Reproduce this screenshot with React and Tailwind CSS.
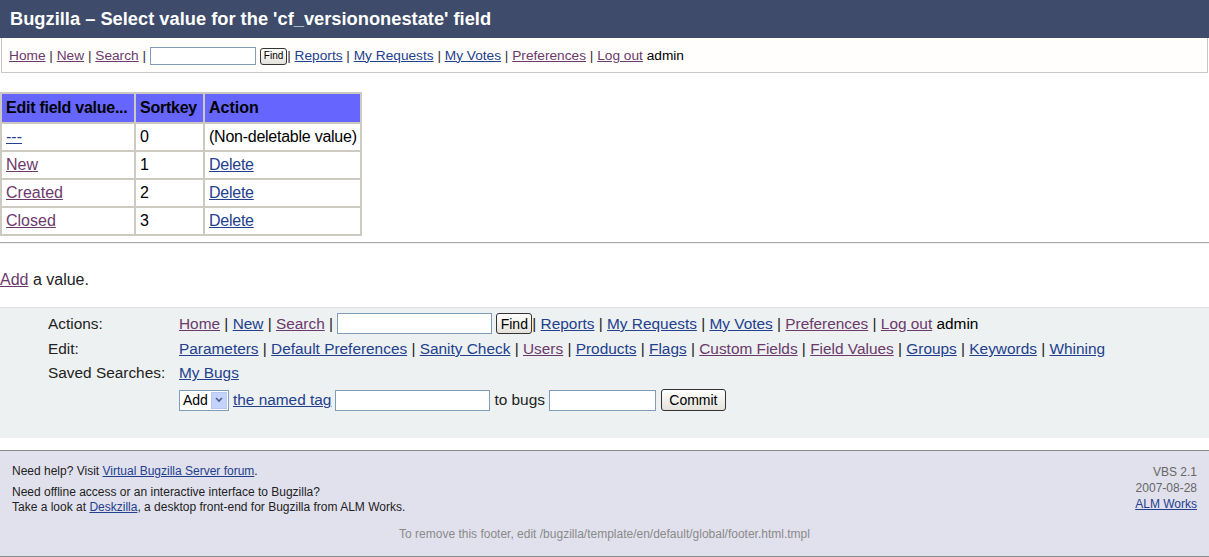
import React from "react";

const visited = "text-[#6b3a6b] underline";
const link = "text-[#23408e] underline";

const Sep = () => <span className="whitespace-pre">{" | "}</span>;

function TopNav() {
  return (
    <div className="mx-[1px] h-[35px] border border-t-0 border-[#c8c8c8] bg-[#fffefc] flex items-center pl-[7px] pt-[2px] text-[13.7px] text-[#333] whitespace-nowrap">
      <a className={visited}>Home</a>
      <Sep />
      <a className={visited}>New</a>
      <Sep />
      <a className={visited}>Search</a>
      <span className="whitespace-pre">{" | "}</span>
      <input className="w-[106px] h-[18px] border border-[#7f9db9] bg-white" />
      <button className="ml-[4px] h-[17px] px-[3px] text-[10px] leading-none rounded-[3px] border border-[#333] bg-gradient-to-b from-white to-[#e4e2da] text-black">
        Find
      </button>
      <span className="whitespace-pre">{"| "}</span>
      <a className={link}>Reports</a>
      <Sep />
      <a className={link}>My Requests</a>
      <Sep />
      <a className={link}>My Votes</a>
      <Sep />
      <a className={visited}>Preferences</a>
      <Sep />
      <a className={visited}>Log out</a>
      <span className="text-black whitespace-pre">{" admin"}</span>
    </div>
  );
}

function ValueTable() {
  const rows = [
    { name: "---", key: "0", action: null },
    { name: "New", key: "1", action: "Delete" },
    { name: "Created", key: "2", action: "Delete" },
    { name: "Closed", key: "3", action: "Delete" },
  ];
  const cell = "border-2 border-[#cdcac1] pl-[4px] pr-[2px] h-[28px] whitespace-nowrap overflow-visible";
  return (
    <table className="mt-[19px] w-[360px] table-fixed border-collapse text-[16px] text-black">
      <colgroup>
        <col className="w-[134px]" />
        <col className="w-[69px]" />
        <col className="w-[157px]" />
      </colgroup>
      <thead>
        <tr className="bg-[#6666ff]">
          <th className={cell + " text-left font-bold h-[30px] tracking-[-0.25px]"}>Edit field value...</th>
          <th className={cell + " text-left font-bold h-[30px] tracking-[-0.25px]"}>Sortkey</th>
          <th className={cell + " text-left font-bold h-[30px]"}>Action</th>
        </tr>
      </thead>
      <tbody>
        {rows.map((r) => (
          <tr key={r.key}>
            <td className={cell}>
              <a className={r.key === "0" ? link : visited}>{r.name}</a>
            </td>
            <td className={cell}>{r.key}</td>
            <td className={cell + " tracking-[-0.25px]"}>
              {r.action ? <a className={link}>{r.action}</a> : "(Non-deletable value)"}
            </td>
          </tr>
        ))}
      </tbody>
    </table>
  );
}

function ActionsBox() {
  const label = "w-[131px] shrink-0";
  return (
    <div className="mt-[15px] bg-[#edf1f1] border-t border-[#dde0e0] h-[131px] pl-[48px] pt-[3px] text-[15.4px] text-[#222] whitespace-nowrap">
      <div className="flex items-center h-[25px]">
        <div className={label}>Actions:</div>
        <a className={visited}>Home</a>
        <Sep />
        <a className={link}>New</a>
        <Sep />
        <a className={visited}>Search</a>
        <span className="whitespace-pre">{" | "}</span>
        <input className="w-[155px] h-[21px] border border-[#7f9db9] bg-white" />
        <button className="ml-[4px] h-[21px] w-[36px] text-[14px] leading-none rounded-[3px] border border-[#333] bg-gradient-to-b from-white to-[#e4e2da] text-black">
          Find
        </button>
        <span className="whitespace-pre">{"| "}</span>
        <a className={link}>Reports</a>
        <Sep />
        <a className={link}>My Requests</a>
        <Sep />
        <a className={link}>My Votes</a>
        <Sep />
        <a className={visited}>Preferences</a>
        <Sep />
        <a className={visited}>Log out</a>
        <span className="text-black whitespace-pre">{" admin"}</span>
      </div>
      <div className="flex items-center h-[25px]">
        <div className={label}>Edit:</div>
        <a className={link}>Parameters</a>
        <Sep />
        <a className={link}>Default Preferences</a>
        <Sep />
        <a className={link}>Sanity Check</a>
        <Sep />
        <a className={visited}>Users</a>
        <Sep />
        <a className={link}>Products</a>
        <Sep />
        <a className={link}>Flags</a>
        <Sep />
        <a className={visited}>Custom Fields</a>
        <Sep />
        <a className={visited}>Field Values</a>
        <Sep />
        <a className={link}>Groups</a>
        <Sep />
        <a className={link}>Keywords</a>
        <Sep />
        <a className={link}>Whining</a>
      </div>
      <div className="flex items-center h-[24px]">
        <div className={label}>Saved Searches:</div>
        <a className={link}>My Bugs</a>
      </div>
      <div className="flex items-center h-[30px]">
        <div className={label}></div>
        <div className="flex items-center h-[21px] w-[50px] border border-[#7f9db9] bg-white text-[14px] text-black">
          <span className="pl-[3px] flex-1">Add</span>
          <span className="w-[16px] h-[17px] mr-[1px] bg-[#c3d3fd] border border-[#b8c8f0] flex items-center justify-center">
            <svg width="8" height="6" viewBox="0 0 8 6">
              <path d="M1 1 L4 4 L7 1" stroke="#4d6185" strokeWidth="1.6" fill="none" />
            </svg>
          </span>
        </div>
        <a className={link + " ml-[4px]"}>the named tag</a>
        <input className="ml-[4px] w-[155px] h-[21px] border border-[#7f9db9] bg-white" />
        <span className="ml-[4px]">to bugs</span>
        <input className="ml-[4px] w-[107px] h-[21px] border border-[#7f9db9] bg-white" />
        <button className="ml-[5px] h-[22px] w-[65px] text-[14px] leading-none rounded-[3px] border border-[#333] bg-gradient-to-b from-white to-[#e4e2da] text-black">
          Commit
        </button>
      </div>
    </div>
  );
}

function Footer() {
  return (
    <div className="mt-[12px] bg-[#e1e1ed] border-y border-[#8a8a8a] h-[107px] px-[12px] pt-[13px] text-[12px] text-[#222]">
      <div className="flex justify-between">
        <div>
          <div className="leading-[15px]">
            Need help? Visit <a className={link}>Virtual Bugzilla Server forum</a>.
          </div>
          <div className="mt-[6px] leading-[15px]">Need offline access or an interactive interface to Bugzilla?</div>
          <div className="leading-[15px]">
            Take a look at <a className={link}>Deskzilla</a>, a desktop front-end for Bugzilla from ALM Works.
          </div>
        </div>
        <div className="text-right text-[#666] leading-[16px]">
          <div>VBS 2.1</div>
          <div>2007-08-28</div>
          <div>
            <a className={link}>ALM Works</a>
          </div>
        </div>
      </div>
      <div className="mt-[10px] text-center text-[#8a8a8a]">
        To remove this footer, edit /bugzilla/template/en/default/global/footer.html.tmpl
      </div>
    </div>
  );
}

export default function App() {
  return (
    <div className="w-[1209px] h-[557px] bg-white overflow-hidden font-['Liberation_Sans',Arial,sans-serif]">
      <div className="h-[38px] bg-[#3e4b6a] text-white font-bold text-[18.3px] flex items-center pl-[10px]">
        Bugzilla – Select value for the 'cf_versiononestate' field
      </div>
      <TopNav />
      <ValueTable />
      <div className="mt-[6px] h-[2px] border-t border-[#aaa] border-b border-b-[#eee]" />
      <div className="mt-[24px] text-[16px] text-[#222]">
        <a className={visited}>Add</a> a value.
      </div>
      <ActionsBox />
      <Footer />
    </div>
  );
}
